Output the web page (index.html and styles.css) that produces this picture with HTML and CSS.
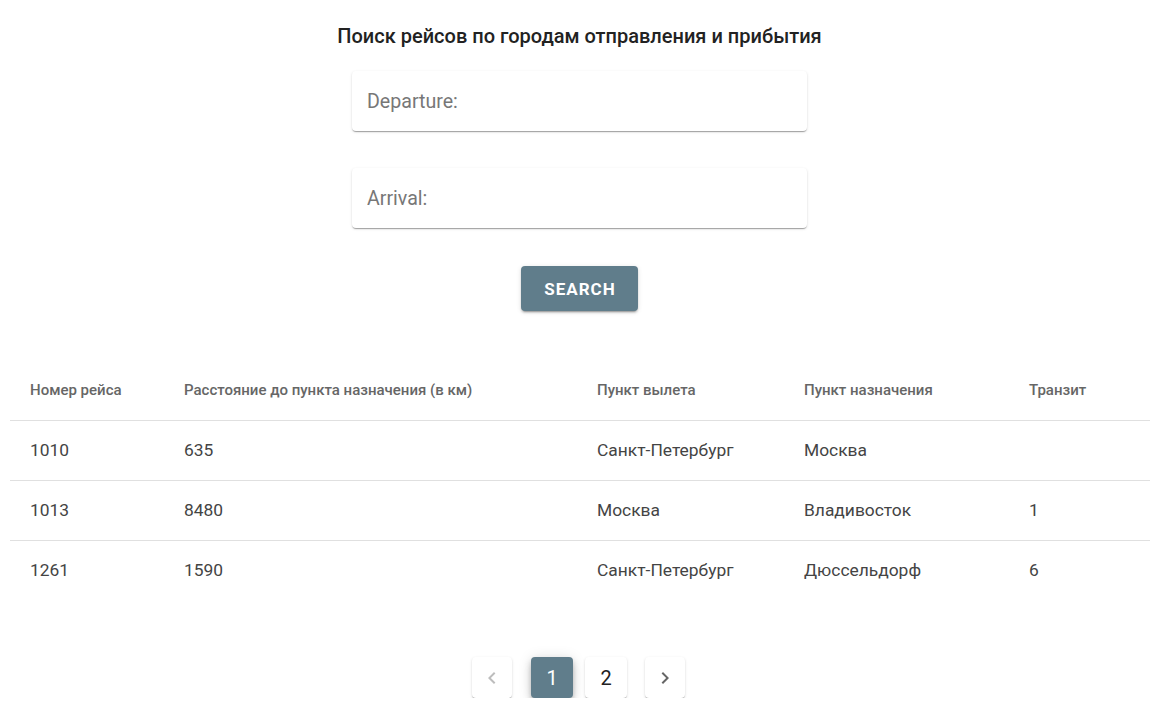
FILE: index.html
```html
<!DOCTYPE html>
<html lang="ru">
<head>
<meta charset="utf-8">
<title>Поиск рейсов</title>
<link rel="stylesheet" href="styles.css">
</head>
<body>
<main class="page">
  <form class="search">
    <h1 class="title">Поиск рейсов по городам отправления и прибытия</h1>
    <div class="field"><input class="input" type="text" placeholder="Departure:"></div>
    <div class="field"><input class="input" type="text" placeholder="Arrival:"></div>
    <button class="btn" type="button">SEARCH</button>
  </form>

  <table class="table">
    <colgroup>
      <col class="c1"><col class="c2"><col class="c3"><col class="c4"><col class="c5">
    </colgroup>
    <thead>
      <tr>
        <th>Номер рейса</th>
        <th>Расстояние до пункта назначения (в км)</th>
        <th>Пункт вылета</th>
        <th>Пункт назначения</th>
        <th>Транзит</th>
      </tr>
    </thead>
    <tbody>
      <tr><td>1010</td><td>635</td><td>Санкт-Петербург</td><td>Москва</td><td></td></tr>
      <tr><td>1013</td><td>8480</td><td>Москва</td><td>Владивосток</td><td>1</td></tr>
      <tr><td>1261</td><td>1590</td><td>Санкт-Петербург</td><td>Дюссельдорф</td><td>6</td></tr>
    </tbody>
  </table>

  <nav class="pager">
    <button class="pg pg-arrow pg-disabled" type="button" aria-label="prev">
      <svg width="24" height="24" viewBox="0 0 24 24"><path d="M15.41 7.41 14 6l-6 6 6 6 1.41-1.41L10.83 12z" fill="currentColor"/></svg>
    </button>
    <button class="pg pg-active" type="button">1</button>
    <button class="pg" type="button">2</button>
    <button class="pg pg-arrow" type="button" aria-label="next">
      <svg width="24" height="24" viewBox="0 0 24 24"><path d="M10 6 8.59 7.41 13.17 12l-4.58 4.59L10 18l6-6z" fill="currentColor"/></svg>
    </button>
  </nav>
</main>
</body>
</html>
```

FILE: styles.css
```css
* { box-sizing: border-box; }
html, body { margin: 0; padding: 0; background: #fff; }
body {
  font-family: Roboto, "Liberation Sans", Arial, sans-serif;
  color: rgba(0,0,0,0.87);
}
.page {
  padding: 0 9px 0 10px;
}
.search {
  display: flex;
  flex-direction: column;
  align-items: center;
  padding-top: 23px;
}
.title {
  margin: 0 0 22px;
  font-size: 20px;
  font-weight: 500;
  line-height: 26px;
  color: #222;
}
.field {
  width: 455px;
  height: 60px;
  margin-bottom: 37px;
  border-radius: 4px;
  background: #fff;
  box-shadow: 0 2px 1px -1px rgba(0,0,0,0.2), 0 1px 1px 0 rgba(0,0,0,0.14), 0 1px 3px 0 rgba(0,0,0,0.12);
}
.input {
  width: 100%;
  height: 100%;
  border: 0;
  outline: none;
  background: transparent;
  padding: 0 15px;
  font-family: inherit;
  font-size: 19.6px;
  font-weight: 400;
  color: #333;
}
.input::placeholder { color: #777; }
.btn {
  margin-top: 1px;
  width: 117px;
  height: 45px;
  border: 0;
  border-radius: 4px;
  background: #607d8b;
  color: #fff;
  font-family: inherit;
  font-size: 17px;
  font-weight: 700;
  letter-spacing: 1px;
  padding: 0 0 0 1px;
  box-shadow: 0 3px 1px -2px rgba(0,0,0,0.2), 0 2px 2px 0 rgba(0,0,0,0.14), 0 1px 5px 0 rgba(0,0,0,0.12);
}
.table {
  margin-top: 49px;
  width: 1140px;
  border-collapse: collapse;
  table-layout: fixed;
}
.c1 { width: 154px; }
.c2 { width: 413px; }
.c3 { width: 207px; }
.c4 { width: 225px; }
.c5 { width: 141px; }
.table th {
  height: 60px;
  padding: 0 0 0 20px;
  text-align: left;
  font-size: 15px;
  font-weight: 500;
  color: #666;
  border-bottom: 1px solid #e0e0e0;
}
.table td {
  height: 60px;
  padding: 0 0 0 20px;
  font-size: 17.4px;
  font-weight: 400;
  color: #444;
  border-bottom: 1px solid #e0e0e0;
}
.table tbody tr:last-child td { border-bottom: 0; }
.pager {
  display: flex;
  justify-content: center;
  align-items: center;
  gap: 12px;
  margin-top: 57px;
  padding-right: 2px;
}
.pg {
  width: 42px;
  height: 41px;
  padding: 0;
  border: 0;
  border-radius: 4px;
  background: #fff;
  font-family: inherit;
  font-size: 20px;
  color: #222;
  display: flex;
  align-items: center;
  justify-content: center;
  box-shadow: 0 2px 1px -1px rgba(0,0,0,0.2), 0 1px 1px 0 rgba(0,0,0,0.14), 0 1px 3px 0 rgba(0,0,0,0.12);
}
.pg-arrow { width: 40px; color: #666; }
.pg-arrow:first-child { margin-right: 7px; }
.pg-arrow:last-child { margin-left: 6px; }
.pg-disabled { color: #bdbdbd; }
.pg-active {
  background: #607d8b;
  color: #fff;
  box-shadow: 0 3px 5px -1px rgba(0,0,0,0.2), 0 5px 8px 0 rgba(0,0,0,0.14), 0 1px 14px 0 rgba(0,0,0,0.12);
}
```
